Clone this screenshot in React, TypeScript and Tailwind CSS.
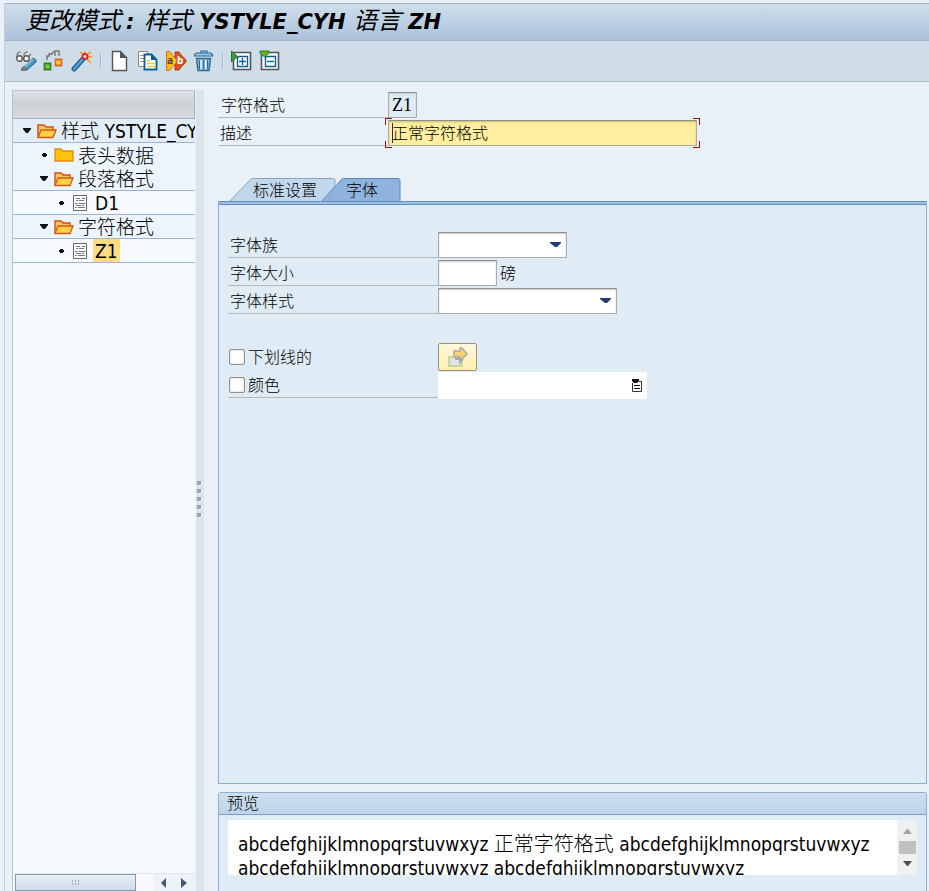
import React from "react";

const base = "font-['Noto_Sans','Noto_Sans_CJK_SC',sans-serif]";
const latin = "font-['DejaVu_Sans_Condensed','Noto_Sans_CJK_SC',sans-serif]";

function Glasses() {
  return (
    <svg width="22" height="22" viewBox="0 0 22 22" fill="none">
      <path d="M2 7V4l2-2h2M9 6V4l2-2h2M14 6l2-2" stroke="#777" strokeWidth="1.2" />
      <circle cx="4.500" cy="8.500" r="2.800" fill="#fff" stroke="#555" strokeWidth="1.400" />
      <circle cx="11.500" cy="8.500" r="2.800" fill="#fff" stroke="#555" strokeWidth="1.400" />
      <path d="M9 17l9-9 3 2v2l-9 8H9z" fill="#4f93bf" stroke="#1f668f" />
      <path d="M10 17l8-8" stroke="#9cc8e4" strokeWidth="1.200" />
      <path d="M6 21v-3l3-2 3 3-2 2z" fill="#777" />
    </svg>
  );
}
function Replace() {
  return (
    <svg width="22" height="22" viewBox="0 0 22 22" fill="none">
      <path d="M4 10V6h2V4h4" stroke="#777" strokeWidth="1.6" />
      <path d="M8 4l4-3h4v5M12 2v4" stroke="#777" strokeWidth="1.400" />
      <path d="M1.500 13.500h6v6h-6z" fill="#86c440" stroke="#35802c" strokeWidth="1.800" />
      <path d="M12.500 9.500h6v6h-6z" fill="#fcd040" stroke="#e36a1c" strokeWidth="1.800" />
    </svg>
  );
}
function Wand() {
  return (
    <svg width="22" height="22" viewBox="0 0 22 22" fill="none">
      <path d="M14 1v3M9 2l3 2M20 2l-3 2M17 7h4M16 9l4 4" stroke="#f39a1e" strokeWidth="1.600" />
      <path d="M3 19 12 9" stroke="#1f5f8c" strokeWidth="5" strokeLinecap="round" />
      <path d="M3 19 12 9" stroke="#5b9fcc" strokeWidth="2.600" strokeLinecap="round" />
      <circle cx="14" cy="6.500" r="2.600" fill="#f7c9c9" stroke="#d8232a" strokeWidth="1.800" />
    </svg>
  );
}
function NewPage() {
  return (
    <svg width="22" height="22" viewBox="0 0 22 22" fill="none">
      <path d="M3.500 1.500h8l6 6v13h-14z" fill="#fff" stroke="#555" strokeWidth="1.400" />
      <path d="M11 1l7 7h-7z" fill="#555" />
    </svg>
  );
}
function CopyPages() {
  return (
    <svg width="22" height="22" viewBox="0 0 22 22" fill="none">
      <path d="M1.500 1.500h9v15h-9z" fill="#fff" stroke="#888" />
      <path d="M3 5.500h4M3 8.500h4M3 11.500h4" stroke="#999" />
      <path d="M7.500 4.500h7l5 5v10h-12z" fill="#fff" stroke="#0a5f94" strokeWidth="1.800" />
      <path d="M14 4l6 6h-6z" fill="#0a5f94" />
      <path d="M10 10.500h3M10 13.500h8M10 16.500h8" stroke="#f8c630" strokeWidth="1.600" />
    </svg>
  );
}
function Rename() {
  return (
    <svg width="22" height="22" viewBox="0 0 22 22" fill="none">
      <path d="M10 2h4l3 4 4 4v2l-4 4-3 4h-4z" fill="#d9531e" stroke="#b63b12" />
      <path d="M1.500 1.500h3l3 4 4 4v3l-4 4-3 4h-3z" fill="#fdc010" stroke="#e2661d" />
      <text x="2" y="14" fontSize="10" fontWeight="700" fill="#444" fontFamily="Noto Sans">a</text>
      <text x="12" y="14" fontSize="10" fontWeight="700" fill="#fff" fontFamily="Noto Sans">b</text>
    </svg>
  );
}
function Trash() {
  return (
    <svg width="22" height="22" viewBox="0 0 22 22" fill="none">
      <path d="M8 3V1h6v2M1.500 6V4.500l2-1.500h14l2 1.500V6z" fill="#9cc6e0" stroke="#2a6d98" strokeWidth="1.200" />
      <path d="M3.500 8.500h14l-1.500 12H5z" fill="#8dbbdb" stroke="#2a6d98" strokeWidth="1.400" />
      <path d="M8 10v9M13 10v9" stroke="#fff" strokeWidth="1.600" />
      <path d="M6.500 10v9M10.500 10v9M14.500 10v9" stroke="#2a6d98" strokeWidth="1.300" />
    </svg>
  );
}
function TreeToggle({ open }: { open: boolean }) {
  return (
    <svg width="22" height="22" viewBox="0 0 22 22" fill="none">
      <path d="M2.500 2.500h17v17h-17z" fill="#fff" stroke="#555" strokeWidth="1.600" />
      <path d="M6.500 6.500h10v10h-10z" fill="#fff" stroke="#0a5f94" strokeWidth="1.400" />
      <path d="M8 11.500h7" stroke="#0a5f94" strokeWidth="1.400" />
      {open ? (
        <>
          <path d="M11.500 8v7" stroke="#0a5f94" strokeWidth="1.400" />
          <path d="M.5 1v11l6-5.500z" fill="#449c35" stroke="#2b752a" />
        </>
      ) : (
        <path d="M1 1h9v2L5.500 7 1 3z" fill="#6cb52b" stroke="#2b752a" />
      )}
    </svg>
  );
}

function Folder({ open }: { open?: boolean }) {
  return (
    <svg width="20" height="16" viewBox="0 0 20 16" className="shrink-0">
      {open ? (
        <>
          <path d="M1 14V2h6l2 2h7v3" fill="#fdc75a" stroke="#cf4c12" strokeWidth="1.4" />
          <path d="M1 14.500 4 7h15l-3 7.500z" fill="#fdd04a" stroke="#cf5a12" strokeWidth="1.300" />
        </>
      ) : (
        <path d="M1 14V2h6l2 2h10v10z" fill="#fec30d" stroke="#e58a10" strokeWidth="1.300" />
      )}
    </svg>
  );
}
function Doc() {
  return (
    <svg width="16" height="18" viewBox="0 0 16 18" className="shrink-0">
      <path d="M1.500 1.500h13v15h-13z" fill="#fff" stroke="#666" />
      <path d="M4 4.500h4M10 4.500h3M4 6.500h2M7 6.500h5M3 9.500h3M7 9.500h6M4 11.500h5M10 11.500h2M3 13.500h2M6 13.500h7" stroke="#777" />
    </svg>
  );
}
function Marker({ open }: { open?: boolean }) {
  return (
    <svg width="10" height="8" viewBox="0 0 10 8" className="shrink-0">
      {open ? <path d="M1 1h8v1L6 6H4L1 2z" fill="#111" /> : <path d="M4 2h3v1h1v2H7v1H4V5H3V3h1z" fill="#111" />}
    </svg>
  );
}

type NodeProps = { indent: string; kind: "open" | "closed" | "doc"; label: React.ReactNode; row: string; selected?: boolean };
function TreeRow({ indent, kind, label, row, selected }: NodeProps) {
  return (
    <li className={`h-6 ${row}`}>
      <button className={`flex h-full w-full items-center whitespace-nowrap text-left ${indent}`}>
        <Marker open={kind === "open"} />
        <span className="w-[5px] shrink-0" />
        {kind === "doc" ? <span className="flex w-[18px] justify-center"><Doc /></span> : <Folder open={kind === "open"} />}
        <span className={`pt-px leading-[22px] ${kind === "doc" ? "ml-1 px-[2px]" : "ml-1"} ${selected ? "bg-[#ffdb82]" : ""}`}>{label}</span>
      </button>
    </li>
  );
}

const cjk = "font-light";
const frame = "h-[26px] border border-[#a9abad] border-t-[#8c8e90] shadow-[inset_0_1px_2px_#c9ccd0] outline-none";

function Combo({ id, width }: { id: string; width: string }) {
  return (
    <span className={`relative block ${width}`}>
      <select id={id} className={`${frame} block w-full appearance-none bg-white`} />
      <svg width="12" height="7" viewBox="0 0 12 7" className="pointer-events-none absolute right-[5px] top-[9px]">
        <path d="M0 1h11v1L7 6H5L0 2z" fill="#243b73" />
      </svg>
    </span>
  );
}

function Row({ label, id, children }: { label: string; id: string; children: React.ReactNode }) {
  return (
    <div className="flex h-7">
      <label htmlFor={id} className="h-[26px] w-[210px] border-b border-[#b5b8bb] pl-[2px] leading-[26px]">{label}</label>
      {children}
    </div>
  );
}

const box = "size-4 shrink-0 appearance-none rounded-[2px] border border-[#8f9193] bg-white shadow-[inset_0_0_2px_#bbb]";
const corner = "absolute size-[7px] border-[#a30d0d]";
const titleCjk = "text-2xl font-normal leading-[34px]";

export default function App() {
  const tools = [<Glasses />, <Replace />, <Wand />, null, <NewPage />, <CopyPages />, <Rename />, <Trash />, null, <TreeToggle open />, <TreeToggle open={false} />];
  const names = ["显示/更改", "替换", "激活", "", "新建", "复制", "重命名", "删除", "", "展开", "折叠"];
  return (
    <div className={`flex h-screen flex-col overflow-hidden bg-[#e9f0f7] pl-1 pt-[3px] text-base font-light text-black ${base}`}>
      <div className="flex min-h-0 flex-1 flex-col border-l border-[#c4cedb]">
        <header className="h-[38px] shrink-0 border-b border-t border-[#9fb2c7] bg-linear-to-b from-[#cfdeea] to-[#abc1da] pl-5">
          <h1 className="whitespace-pre font-['DejaVu_Sans','Noto_Sans_CJK_SC',sans-serif] text-[21px] font-bold italic leading-[34px]"><span className={titleCjk}>更改模式</span><span className="inline-block w-[23px] pl-[5px]">:</span><span className={titleCjk}>样式</span> YSTYLE_CYH <span className={titleCjk}>语言</span> ZH</h1>
        </header>
        <div className="flex h-[41px] shrink-0 items-center gap-[6px] border-b border-[#a9bccb] bg-[#cfdde8] pl-[10px]">
          {tools.map((t, i) => t ? <button key={i} aria-label={names[i]}>{t}</button> : <span key={i} className="mx-px h-4 w-[2px] border-r border-[#dae8f3] bg-[#9dbbd6]" />)}
        </div>
        <div className="flex min-h-0 flex-1">
          <aside className="ml-[7px] mt-2 flex w-[183px] shrink-0 flex-col overflow-hidden border-l border-t border-[#b5c3d0] bg-[#f7fbff]">
            <div className="h-7 shrink-0 border-b border-r border-[#a1afbd] bg-linear-to-b from-[#dfe2e5] via-[#cbd0d5] to-[#dadcdf]" />
            <ul className={`min-h-0 flex-1 text-[19px] ${latin}`}>
              <TreeRow indent="pl-[9px]" kind="open" row="border-b border-[#9db4ce] bg-[#e2edf7]" label={<><span className={cjk}>样式</span><span className="font-normal"> YSTYLE_CYH</span></>} />
              <TreeRow indent="pl-[26px]" kind="closed" row="bg-[#edf5fc]" label={<span className={cjk}>表头数据</span>} />
              <TreeRow indent="pl-[26px]" kind="open" row="border-b border-[#9db4ce] bg-[#edf5fc]" label={<span className={cjk}>段落格式</span>} />
              <TreeRow indent="pl-[43px]" kind="doc" row="border-b border-[#9db4ce]" label={<span className="font-normal">D1</span>} />
              <TreeRow indent="pl-[26px]" kind="open" row="border-b border-[#9db4ce] bg-[#edf5fc]" label={<span className={cjk}>字符格式</span>} />
              <TreeRow indent="pl-[43px]" kind="doc" selected row="border-b border-[#9db4ce]" label={<span className="font-normal">Z1</span>} />
            </ul>
            <div className="flex h-[18px] shrink-0 border-t border-[#dfe6ed] bg-[#f9f9fb] pl-[2px]">
              <div className="flex w-[121px] items-center justify-center border border-[#8499b0] bg-linear-to-b from-[#e7eef5] to-[#cfdbe7]">
                <svg width="10" height="6" viewBox="0 0 10 6"><path d="M1 1h1m2 0h1m2 0h1M1 4h1m2 0h1m2 0h1" stroke="#8b9aab" strokeWidth="1.4" /></svg>
              </div>
              <div className="ml-auto flex bg-[#eef3fa] pr-px">
                <button aria-label="向左" className="flex w-5 items-center justify-center"><svg width="6" height="10" viewBox="0 0 6 10"><path d="M5 0v10L0 5z" fill="#44576b" /></svg></button>
                <button aria-label="向右" className="flex w-5 items-center justify-center"><svg width="6" height="10" viewBox="0 0 6 10"><path d="M0 0v10l6-5z" fill="#44576b" /></svg></button>
              </div>
            </div>
          </aside>
          <div className="ml-px mt-2 flex w-2 shrink-0 flex-col items-start justify-center gap-1 bg-[#dae5eb] pl-px pt-4">
            {[0, 1, 2, 3, 4].map((i) => <span key={i} className="size-1 bg-[#98a5b5] shadow-[1px_1px_0_white]" />)}
          </div>
          <main className="ml-[14px] mr-[2px] flex min-w-0 flex-1 flex-col">
            <div className="mt-[10px] flex h-7 shrink-0">
              <label htmlFor="format" className="h-[26px] w-[170px] border-b border-[#b5b8bb] pl-[3px] leading-[26px]">字符格式</label>
              <input id="format" readOnly defaultValue="Z1" className={`${frame} w-[29px] bg-[#dfebf5] pl-[3px] font-['Liberation_Serif',serif] text-lg font-normal`} />
            </div>
            <div className="flex h-7 shrink-0">
              <label htmlFor="desc" className="h-[26px] w-[170px] border-b border-[#b5b8bb] pl-[2px] leading-[26px]">描述</label>
              <span className="relative block w-[309px]">
                <input id="desc" defaultValue="正常字符格式" className="block h-[26px] w-full border border-[#a9abad] border-t-[#8c8e90] bg-[#ffef9f] pb-[2px] pl-[3px] font-light shadow-[inset_0_1px_2px_#c9b96c] outline-none" />
                <span className="absolute left-[4px] top-[3px] h-5 w-px bg-[#1c2b80]" />
                <span className={`${corner} -left-[3px] -top-[2px] border-l border-t`} />
                <span className={`${corner} bottom-0 -left-[3px] border-b border-l`} />
                <span className={`${corner} -right-[3px] -top-[2px] border-r border-t`} />
                <span className={`${corner} bottom-0 -right-[3px] border-b border-r`} />
              </span>
            </div>
            <div role="tablist" className="mt-[30px] flex h-[23px] shrink-0 pl-3">
              <button role="tab" aria-selected="false" className="relative h-full w-[106px] pl-[23px] text-left leading-[25px]">
                <svg width="106" height="23" viewBox="0 0 106 23" className="absolute left-0 top-0">
                  <path d="M0 23 20 2q1-1.500 3-1.500h80q2 0 2 2V23" fill="#c1d7eb" stroke="#86a7c7" />
                </svg>
                <span className="relative">标准设置</span>
              </button>
              <button role="tab" aria-selected="true" className="relative -ml-[14px] h-full w-[79px] pl-6 text-left leading-[25px]">
                <svg width="79" height="23" viewBox="0 0 79 23" className="absolute left-0 top-0">
                  <path d="M0 23 19 2q1-1.500 3-1.500h54q2 0 2 2V23" fill="#8fb3dc" stroke="#5788b4" />
                </svg>
                <span className="relative">字体</span>
              </button>
            </div>
            <section className="min-h-0 flex-1 border border-t-0 border-[#8db0d0] bg-[#dfebf5]">
              <div className="mb-[27px] h-1 border-b border-t border-[#628db9] bg-[#9cbfe2]" />
              <div className="pl-[9px]">
                <Row label="字体族" id="family"><Combo id="family" width="w-[129px]" /></Row>
                <Row label="字体大小" id="size">
                  <input id="size" className={`${frame} w-[59px] bg-white`} />
                  <span className="ml-[3px] leading-[26px]">磅</span>
                </Row>
                <Row label="字体样式" id="fstyle"><Combo id="fstyle" width="w-[179px]" /></Row>
                <div className="mt-[27px] flex h-[29px]">
                  <label className="flex h-[27px] w-[210px] items-center gap-[3px] pl-px"><input type="checkbox" className={box} />下划线的</label>
                  <button aria-label="下划线选项" className="flex h-7 w-[39px] items-center justify-center rounded-[2px] border border-[#999477] bg-linear-to-b from-[#fff9dc] to-[#ffefae]">
                    <svg width="20" height="20" viewBox="0 0 20 20"><path d="M1 10h13v9H1z" fill="#e3e3e3" stroke="#b8cf86" strokeWidth="1.400" /><path d="M7 12h5v3l3-3" stroke="#a8a8a8" strokeWidth="2" fill="none" /><path d="M6 4h6V1h2l5 6-5 5h-2v-2H6z" fill="#f8d377" stroke="#a8a8a8" strokeWidth="1.400" /></svg>
                  </button>
                </div>
                <div className="flex h-[27px]">
                  <label htmlFor="useColor" className="flex h-[26px] w-[210px] items-center gap-[3px] border-b border-[#b5b8bb] pl-px"><input id="useColor" type="checkbox" className={box} />颜色</label>
                  <span className="relative block">
                    <input aria-label="颜色值" className="block h-[27px] w-[209px] bg-white outline-none" />
                    <svg width="12" height="13" viewBox="0 0 12 13" className="absolute right-[4px] top-[7px]"><path d="M1.500 4v8.500h9v-10H8" fill="#fff" stroke="#333" /><path d="M1 0h7v2L6 4H3L1 2zM3 6h6v1H3zM3 9h6v1H3z" fill="#111" /></svg>
                  </span>
                </div>
              </div>
            </section>
            <section className="mt-2 h-[99px] shrink-0 rounded-t-[3px] border border-b-0 border-[#8db0d0] bg-[#dfebf5]">
              <h2 className="h-[22px] border-b border-[#7fa3c8] bg-linear-to-b from-[#cfdfee] to-[#bcd4ea] pl-2 font-light leading-[21px]">预览</h2>
              <div className="mx-[9px] mt-[5px] flex h-[55px] overflow-hidden bg-white">
                <p className={`min-w-0 flex-1 pl-[10px] pt-[12px] text-[19px] font-normal leading-6 ${latin}`}>abcdefghijklmnopqrstuvwxyz <span className="text-xl font-light leading-6">正常字符格式</span> abcdefghijklmnopqrstuvwxyz abcdefghijklmnopqrstuvwxyz abcdefghijklmnopqrstuvwxyz</p>
                <div className="flex w-5 flex-col items-center justify-between bg-[#f0f0f0] py-[9px]">
                  <svg width="9" height="5" viewBox="0 0 9 5"><path d="M0 5 4 0h1l4 5z" fill="#a3a3a3" /></svg>
                  <span className="h-[13px] w-[17px] bg-[#c1c1c1]" />
                  <svg width="9" height="5" viewBox="0 0 9 5"><path d="M0 0h9L5 5H4z" fill="#505050" /></svg>
                </div>
              </div>
            </section>
          </main>
        </div>
      </div>
    </div>
  );
}
